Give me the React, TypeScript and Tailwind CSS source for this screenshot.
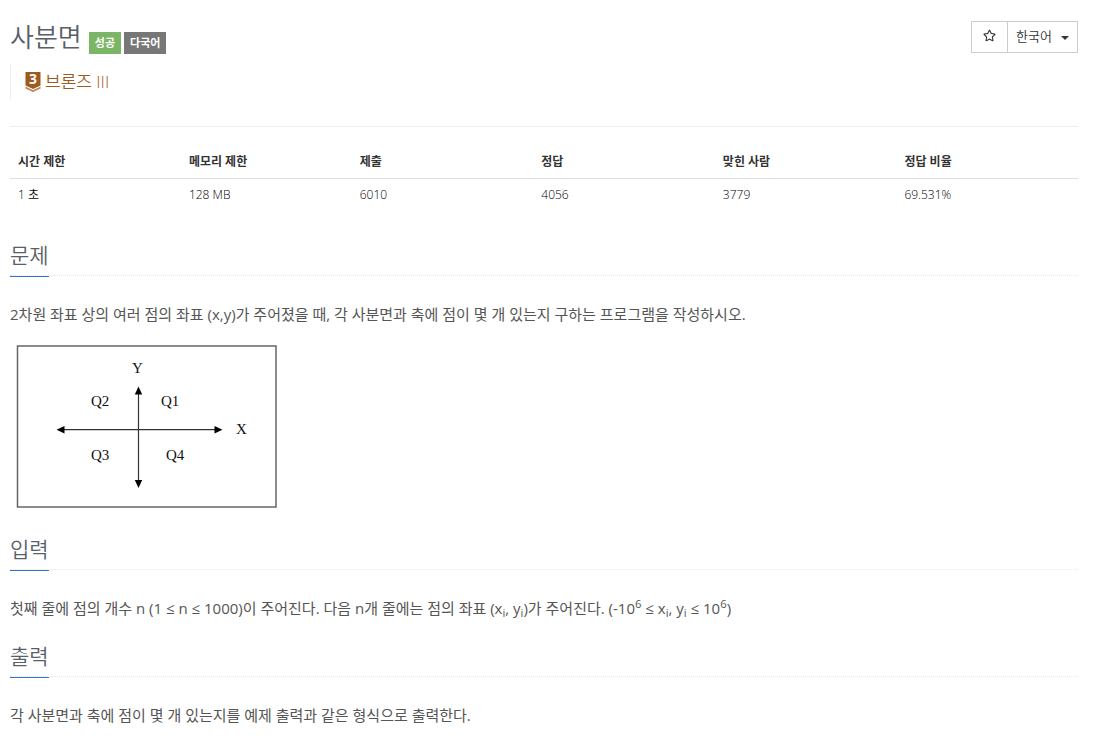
import type { ReactNode } from "react";
import { FaRegStar } from "react-icons/fa";

const stats = [
  { label: "시간 제한", value: "1 초", width: "w-[16%]" },
  { label: "메모리 제한", value: "128 MB", width: "w-[16%]" },
  { label: "제출", value: "6010", width: "w-[17%]" },
  { label: "정답", value: "4056", width: "w-[17%]" },
  { label: "맞힌 사람", value: "3779", width: "w-[17%]" },
  { label: "정답 비율", value: "69.531%", width: "w-[17%]" },
];

function TierBadge() {
  return (
    <svg viewBox="0 0 16 20" className="h-5 w-4 overflow-visible" aria-hidden="true">
      <path d="M0.5 0H15.5V13.6L8 17L0.5 13.6Z" fill="#9d5b1d" />
      <path d="M0.5 14.8L8 18.2L15.5 14.8V16.6L8 20L0.5 16.6Z" fill="#9d5b1d" />
      <path d="M0.5 15.7L8 19.1L15.5 15.7" fill="none" stroke="#fff" strokeWidth="0.4" />
      <text
        x="8"
        y="12"
        textAnchor="middle"
        fill="#fff"
        className="font-['Open_Sans','Liberation_Sans',sans-serif] text-[14px] font-bold"
      >
        3
      </text>
    </svg>
  );
}

function QuadrantFigure() {
  return (
    <svg
      viewBox="0 0 274 170"
      className="h-[170px] w-[274px] font-['Liberation_Serif',serif] text-[15px]"
      role="img"
      aria-label="Q1 Q2 Q3 Q4"
    >
      <rect x="7.5" y="5" width="258.5" height="161" fill="none" stroke="#666" strokeWidth="1.5" />
      <g stroke="#333" strokeWidth="1.2">
        <line x1="52" y1="88.7" x2="208" y2="88.7" />
        <line x1="128.5" y1="52" x2="128.5" y2="142" />
      </g>
      <g fill="#000">
        <path d="M46.5 88.7L54.5 85V92.4Z" />
        <path d="M212.5 88.7L204.5 85V92.4Z" />
        <path d="M128.5 45.5L124.8 53.5H132.2Z" />
        <path d="M128.5 147L124.8 139H132.2Z" />
      </g>
      <g fill="#111">
        <text x="122" y="32">Y</text>
        <text x="226" y="93">X</text>
        <text x="81" y="65">Q2</text>
        <text x="151" y="65">Q1</text>
        <text x="81" y="119">Q3</text>
        <text x="156" y="119">Q4</text>
      </g>
    </svg>
  );
}

function Section({ title, children }: { title: string; children: ReactNode }) {
  return (
    <section>
      <div className="mb-6 flex border-b border-dotted border-[#e4e9f0]">
        <h2 className="-mb-0.5 border-b border-[#3374c2] pb-[5px] text-[21px] leading-8 text-[#585f69]">
          {title}
        </h2>
      </div>
      <div className="text-[15px] leading-7 font-normal text-[#555]">{children}</div>
    </section>
  );
}

export default function App() {
  return (
    <main className="min-h-screen bg-white pt-5 pr-4 pb-4 pl-2.5 font-['Open_Sans','Noto_Sans_CJK_KR',sans-serif] font-[350] text-[#333]">
      <header className="flex items-start justify-between">
        <div className="flex items-end gap-[3px]">
          <h1 className="mr-1 text-[26px] leading-[34px] text-[#585f69]">사분면</h1>
          <span className="bg-[#7ab665] px-1.5 text-[11px] leading-[22px] font-bold text-white">성공</span>
          <span className="bg-[#777] px-1.5 text-[11px] leading-[22px] font-bold text-white">다국어</span>
        </div>
        <div className="mt-px flex h-8 border border-[#ccc] text-[13px]">
          <button type="button" aria-label="즐겨찾기" className="flex w-9 items-center justify-center border-r border-[#ccc] pb-1">
            <FaRegStar className="size-[13px]" />
          </button>
          <button type="button" className="flex items-center gap-[9px] px-2">
            한국어
            <span className="mt-0.5 border-x-4 border-t-4 border-x-transparent border-t-[#333]" />
          </button>
        </div>
      </header>

      <blockquote className="mt-2.5 mb-[26px] flex h-9 items-center gap-1 border-l border-[#eee] pl-3.5 text-[17px] leading-6 text-[#9d5b1d]">
        <TierBadge />
        <span>브론즈 III</span>
      </blockquote>

      <hr className="mb-[19px] border-[#eee]" />

      <table className="mb-7 w-full table-fixed text-left text-[12px] leading-4">
        <thead>
          <tr className="border-b border-[#ddd]">
            {stats.map(({ label, width }) => (
              <th key={label} className={`${width} px-2 py-2 font-bold`}>
                {label}
              </th>
            ))}
          </tr>
        </thead>
        <tbody className="text-black">
          <tr>
            {stats.map(({ label, value }) => (
              <td key={label} className="px-2 py-2">
                {value}
              </td>
            ))}
          </tr>
        </tbody>
      </table>

      <div className="space-y-[18px]">
        <Section title="문제">
          <p>2차원 좌표 상의 여러 점의 좌표 (x,y)가 주어졌을 때, 각 사분면과 축에 점이 몇 개 있는지 구하는 프로그램을 작성하시오.</p>
          <div className="mt-[13px] pb-1">
            <QuadrantFigure />
          </div>
        </Section>

        <Section title="입력">
          <p>
            첫째 줄에 점의 개수 n (1 ≤ n ≤ 1000)이 주어진다. 다음 n개 줄에는 점의 좌표 (x<sub>i</sub>, y<sub>i</sub>)가
            주어진다. (-10<sup>6</sup> ≤ x<sub>i</sub>, y<sub>i</sub> ≤ 10<sup>6</sup>)
          </p>
        </Section>

        <Section title="출력">
          <p>각 사분면과 축에 점이 몇 개 있는지를 예제 출력과 같은 형식으로 출력한다.</p>
        </Section>
      </div>
    </main>
  );
}
